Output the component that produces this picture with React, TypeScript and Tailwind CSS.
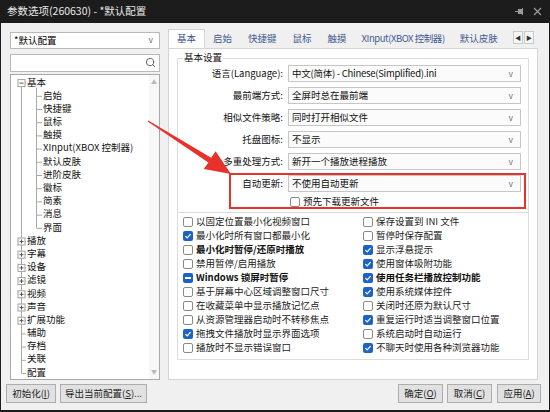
import React from 'react';
import { Search } from 'lucide-react';

type CheckState = 'off' | 'on' | 'mixed';

const treeRows: { label: string; level: 0 | 1; box?: 'minus' | 'plus' }[] = [
  { label: '基本', level: 0, box: 'minus' },
  { label: '启始', level: 1 },
  { label: '快捷键', level: 1 },
  { label: '鼠标', level: 1 },
  { label: '触摸', level: 1 },
  { label: 'XInput(XBOX 控制器)', level: 1 },
  { label: '默认皮肤', level: 1 },
  { label: '进阶皮肤', level: 1 },
  { label: '徽标', level: 1 },
  { label: '简素', level: 1 },
  { label: '消息', level: 1 },
  { label: '界面', level: 1 },
  { label: '播放', level: 0, box: 'plus' },
  { label: '字幕', level: 0, box: 'plus' },
  { label: '设备', level: 0, box: 'plus' },
  { label: '滤镜', level: 0, box: 'plus' },
  { label: '视频', level: 0, box: 'plus' },
  { label: '声音', level: 0, box: 'plus' },
  { label: '扩展功能', level: 0, box: 'plus' },
  { label: '辅助', level: 0 },
  { label: '存档', level: 0 },
  { label: '关联', level: 0 },
  { label: '配置', level: 0 },
];

const tabs = ['基本', '启始', '快捷键', '鼠标', '触摸', 'XInput(XBOX 控制器)', '默认皮肤', '设置'];

const selects = [
  ['语言(Language):', '中文(简体) - Chinese(Simplified).ini'],
  ['最前端方式:', '全屏时总在最前端'],
  ['相似文件策略:', '同时打开相似文件'],
  ['托盘图标:', '不显示'],
  ['多重处理方式:', '新开一个播放进程播放'],
  ['自动更新:', '不使用自动更新'],
];

const leftChecks: [string, CheckState, boolean?][] = [
  ['以固定位置最小化视频窗口', 'off'],
  ['最小化时所有窗口都最小化', 'on'],
  ['最小化时暂停/还原时播放', 'off', true],
  ['禁用暂停/启用播放', 'off'],
  ['Windows 锁屏时暂停', 'mixed', true],
  ['基于屏幕中心区域调整窗口尺寸', 'off'],
  ['在收藏菜单中显示播放记忆点', 'off'],
  ['从资源管理器启动时不转移焦点', 'off'],
  ['拖拽文件播放时显示界面选项', 'on'],
  ['播放时不显示错误窗口', 'off'],
];

const rightChecks: [string, CheckState, boolean?][] = [
  ['保存设置到 INI 文件', 'off'],
  ['暂停时保存配置', 'off'],
  ['显示浮悬提示', 'on'],
  ['使用窗体吸附功能', 'on'],
  ['使用任务栏播放控制功能', 'on', true],
  ['使用系统媒体控件', 'on'],
  ['关闭时还原为默认尺寸', 'off'],
  ['重复运行时适当调整窗口位置', 'on'],
  ['系统启动时自动运行', 'off'],
  ['不聊天时使用各种浏览器功能', 'on'],
];

function Check({ state }: { state: CheckState }) {
  if (state === 'off') {
    return <span className="w-[10px] h-[10px] rounded-[2px] border border-[#8a8a8a] bg-white shrink-0" />;
  }
  return (
    <span className="w-[10px] h-[10px] rounded-[2px] bg-[#1d62c6] shrink-0 flex items-center justify-center">
      {state === 'on' ? (
        <svg width="8" height="8" viewBox="0 0 8 8">
          <path d="M1.4 4.1 L3.2 5.9 L6.6 2.1" stroke="white" strokeWidth="1.3" fill="none" />
        </svg>
      ) : (
        <span className="w-[6px] h-[2px] bg-white" />
      )}
    </span>
  );
}

function CheckRow({ label, state, bold }: { label: string; state: CheckState; bold?: boolean }) {
  return (
    <div className="h-[14px] flex items-center gap-[3px] whitespace-nowrap">
      <Check state={state} />
      <span className={bold ? 'font-bold text-[#111]' : 'text-[#222]'}>{label}</span>
    </div>
  );
}

function Btn({ children, w }: { children: React.ReactNode; w: string }) {
  return (
    <div className={`${w} h-[19px] border border-[#adadad] bg-[#e1e1e1] flex items-center justify-center text-[9.5px] text-[#222]`}>
      {children}
    </div>
  );
}

function TreeLines() {
  const y = (i: number) => 7.6 + 13.2 * i;
  return (
    <svg className="absolute left-0 top-0 pointer-events-none" width="140" height="306">
      <g stroke="#a8a8a8" strokeWidth="1" fill="none">
        <line x1="10.5" y1={y(0)} x2="10.5" y2={y(22)} />
        <line x1="25.5" y1={y(0) + 5} x2="25.5" y2={y(11)} />
        {treeRows.map((r, i) =>
          r.level === 1 ? (
            <line key={i} x1="25.5" y1={y(i) + 0.5} x2="31" y2={y(i) + 0.5} />
          ) : (
            <line key={i} x1="10.5" y1={y(i) + 0.5} x2="15" y2={y(i) + 0.5} />
          )
        )}
      </g>
      {treeRows.map((r, i) =>
        r.box ? (
          <g key={'b' + i}>
            <rect x="7" y={y(i) - 3} width="7" height="7" fill="white" stroke="#a0a0a0" />
            <line x1="8.5" y1={y(i) + 0.5} x2="12.5" y2={y(i) + 0.5} stroke="#555" />
            {r.box === 'plus' && <line x1="10.5" y1={y(i) - 1.5} x2="10.5" y2={y(i) + 2.5} stroke="#555" />}
          </g>
        ) : null
      )}
    </svg>
  );
}

function Arrow() {
  return (
    <svg className="absolute left-0 top-0 pointer-events-none" width="550" height="412">
      <polygon
        points="148.3,120.4 211.2,157.8 215.6,151.3 231,174 203.8,169 208.4,162.4 147.7,121.5"
        fill="#e8312c"
      />
    </svg>
  );
}

export default function App() {
  return (
    <div className="w-[550px] h-[412px] bg-[#1c1c1c] flex flex-col relative overflow-hidden font-['Noto_Sans_CJK_SC','Noto_Sans',sans-serif] text-[9.5px] leading-none">
      {/* title bar */}
      <div className="h-[23px] flex items-center pl-[7px] pr-[8px] text-[10.5px] text-[#e8e8e8] shrink-0">
        <span>参数选项(260630) - *默认配置</span>
        <div className="ml-auto flex items-center gap-[9px] text-[#9a9a9a]">
          <svg width="9" height="7" viewBox="0 0 9 7">
            <rect x="3" y="1" width="4" height="5" fill="#9a9a9a" />
            <rect x="0" y="3" width="3" height="1" fill="#9a9a9a" />
            <rect x="7" y="0" width="1" height="7" fill="#9a9a9a" />
          </svg>
          <svg width="9" height="9" viewBox="0 0 9 9">
            <path d="M1 1 L8 8 M8 1 L1 8" stroke="#a0a0a0" strokeWidth="1.1" />
          </svg>
        </div>
      </div>

      <div className="flex-1 mx-px mb-[2px] bg-[#f0f0f0] flex flex-col">
        <div className="h-[357px] pt-[7px] flex">
          {/* left column */}
          <div className="ml-[9px] w-[150px] pt-[2px] flex flex-col">
            <div className="h-[17px] border border-[#b9b9b9] bg-white flex items-center pl-[3px] pr-[6px]">
              <span>*默认配置</span>
              <span className="ml-auto text-[8px] text-[#666]">v</span>
            </div>
            <div className="mt-[5px] h-[18px] border border-[#b9b9b9] bg-white flex items-center justify-end pr-[3px]">
              <Search className="w-[11px] h-[11px] text-[#555]" strokeWidth={2} />
            </div>
            <div className="mt-[2px] flex-1 border border-[#a9a9a9] bg-white flex">
              <div className="flex-1 relative pt-[1px] text-[#111]">
                <TreeLines />
                {treeRows.map((r, i) => (
                  <div
                    key={i}
                    className={`h-[13.2px] flex items-center whitespace-nowrap ${r.level === 1 ? 'pl-[32px]' : 'pl-[16px]'}`}
                  >
                    {r.label}
                  </div>
                ))}
              </div>
              <div className="w-[10px] bg-[#f7f7f7] flex flex-col items-center justify-between py-[4px] text-[6px] text-[#b8b8b8]">
                <span>▲</span>
                <span>▼</span>
              </div>
            </div>
          </div>

          {/* right column */}
          <div className="ml-[8px] w-[370px] flex flex-col">
            <div className="h-[18px] flex items-end">
              <div className="w-[343px] overflow-hidden flex items-end h-[19px] relative z-10">
                {tabs.map((t, i) => (
                  <div
                    key={t}
                    className={
                      i === 0
                        ? 'h-[19px] px-[8px] bg-white border-x border-t border-[#d4d4d4] flex items-center text-[#3a4f8a] whitespace-nowrap shrink-0'
                        : i === 5
                        ? 'h-[19px] px-[7px] flex items-center text-[#44598f] whitespace-nowrap shrink-0 tracking-[-0.45px]'
                        : 'h-[19px] px-[8px] flex items-center text-[#44598f] whitespace-nowrap shrink-0'
                    }
                  >
                    {t}
                  </div>
                ))}
              </div>
              <div className="self-start mt-[1px] ml-[2px] flex gap-[1px]">
                <div className="w-[10px] h-[13px] border border-[#c9c9c9] bg-[#f6f6f6] flex items-center justify-center text-[6px] text-[#333]">◀</div>
                <div className="w-[10px] h-[13px] border border-[#c9c9c9] bg-[#f6f6f6] flex items-center justify-center text-[6px] text-[#333]">▶</div>
              </div>
            </div>

            <div className="flex-1 border border-[#d4d4d4] bg-white pt-[9px] pl-[8px]">
              {/* group 1 */}
              <div className="relative w-[352px] h-[155px] border border-[#dcdcdc] pt-[6px]">
                <span className="absolute left-[5px] top-[-7px] bg-white px-[1px] h-[12px] flex items-center text-[#111]">基本设置</span>
                <div className="flex flex-col gap-[5px]">
                  {selects.map(([label, value], i) => (
                    <div key={label} className="h-[17px] flex items-center">
                      <span className="w-[105px] text-right text-[#111] whitespace-nowrap">{label}</span>
                      <div className="ml-[5px] w-[233px] h-[17px] border border-[#c6c6c6] bg-[#fbfbfb] flex items-center pl-[3px] pr-[7px] whitespace-nowrap">
                        <span className={i === 0 ? 'text-[#111] tracking-[-0.25px]' : 'text-[#111]'}>{value}</span>
                        <span className="ml-auto text-[8px] text-[#666]">v</span>
                      </div>
                    </div>
                  ))}
                </div>
                <div className="mt-[4px] h-[12px] pl-[112px] flex items-center gap-[3px]">
                  <Check state="off" />
                  <span className="text-[#111]">预先下载更新文件</span>
                </div>
                <div className="absolute left-[51px] top-[114px] w-[297px] h-[36px] border-2 border-[#e5332e] pointer-events-none" />
              </div>

              {/* group 2 */}
              <div className="-mt-px w-[352px] h-[148px] border border-[#dcdcdc] pt-[2px] pl-[5px] flex">
                <div className="w-[180px] flex flex-col">
                  {leftChecks.map(([l, s, b]) => (
                    <CheckRow key={l} label={l} state={s} bold={b} />
                  ))}
                </div>
                <div className="flex flex-col">
                  {rightChecks.map(([l, s, b]) => (
                    <CheckRow key={l} label={l} state={s} bold={b} />
                  ))}
                </div>
              </div>
            </div>
          </div>
        </div>

        {/* bottom buttons */}
        <div className="flex pt-[4px] pl-[5px] pr-[8px]">
          <Btn w="w-[50px]">初始化(<u>I</u>)</Btn>
          <div className="ml-[4px]">
            <Btn w="w-[87px]">导出当前配置(<u>S</u>)...</Btn>
          </div>
          <div className="ml-auto flex">
            <Btn w="w-[45px]">确定(<u>O</u>)</Btn>
            <div className="ml-[4px]">
              <Btn w="w-[45px]">取消(<u>C</u>)</Btn>
            </div>
            <div className="ml-[5px]">
              <Btn w="w-[44px]">应用(<u>A</u>)</Btn>
            </div>
          </div>
        </div>
      </div>

      <Arrow />
    </div>
  );
}
